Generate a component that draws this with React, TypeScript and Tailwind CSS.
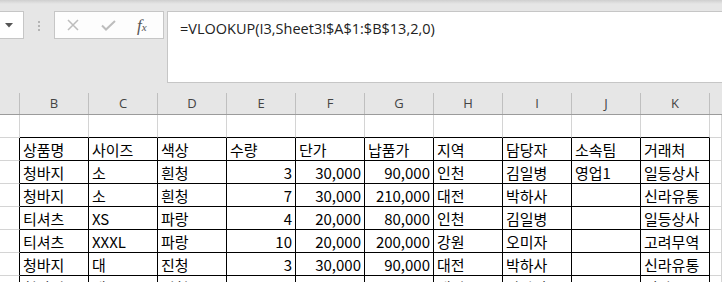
const COLS = ['B', 'C', 'D', 'E', 'F', 'G', 'H', 'I', 'J', 'K'];

const ROWS: string[][] = [
  ['', '', '', '', '', '', '', '', '', ''],
  ['상품명', '사이즈', '색상', '수량', '단가', '납품가', '지역', '담당자', '소속팀', '거래처'],
  ['청바지', '소', '흰청', '3', '30,000', '90,000', '인천', '김일병', '영업1', '일등상사'],
  ['청바지', '소', '흰청', '7', '30,000', '210,000', '대전', '박하사', '', '신라유통'],
  ['티셔츠', 'XS', '파랑', '4', '20,000', '80,000', '인천', '김일병', '', '일등상사'],
  ['티셔츠', 'XXXL', '파랑', '10', '20,000', '200,000', '강원', '오미자', '', '고려무역'],
  ['청바지', '대', '진청', '3', '30,000', '90,000', '대전', '박하사', '', '신라유통'],
  ['청바지', '대', '진청', '1', '30,000', '30,000', '대전', '박하사', '', '신라유통'],
];

const cellFont = { fontFamily: '"Noto Sans CJK KR", "Noto Sans", sans-serif' };
const uiFont = { fontFamily: '"Open Sans", "Noto Sans", sans-serif' };

function FormulaBar() {
  return (
    <div className="h-[93px] bg-[#e6e6e6]">
      <div className="h-[4px] bg-gradient-to-b from-[#cfcfcf] to-[#e6e6e6]" />
      <div className="flex items-start pt-[7px]">
        <div className="flex h-[28px] w-[24px] items-center border-y border-r border-[#c6c6c6] bg-white pl-[5px]">
          <svg width="8" height="5" viewBox="0 0 8 5">
            <path d="M0 0h8L4 4.5z" fill="#555" />
          </svg>
        </div>
        <div className="flex h-[28px] w-[30px] flex-col items-center justify-center gap-[2px] pt-[1px]">
          <span className="h-[2px] w-[2px] bg-[#b4b4b4]" />
          <span className="h-[2px] w-[2px] bg-[#b4b4b4]" />
          <span className="h-[2px] w-[2px] bg-[#b4b4b4]" />
        </div>
        <div className="flex h-[28px] w-[110px] items-center border border-[#c6c6c6] bg-[#fdfdfd]">
          <svg className="ml-[12px]" width="12" height="12" viewBox="0 0 12 12">
            <path d="M1 1l10 10M11 1L1 11" stroke="#bdbdbd" strokeWidth="1.5" fill="none" />
          </svg>
          <svg className="ml-[22px]" width="15" height="11" viewBox="0 0 15 11">
            <path d="M1 5.5l4 4L14 1" stroke="#bdbdbd" strokeWidth="2" fill="none" />
          </svg>
          <span
            className="ml-[21px] italic text-[17px] leading-none text-[#555]"
            style={{ fontFamily: '"Liberation Serif", serif' }}
          >
            f<span className="text-[11px]">x</span>
          </span>
        </div>
        <div className="ml-[3px] h-[72px] flex-1 border-y border-l border-[#c6c6c6] bg-white pl-[12px] pt-[4px]">
          <span className="text-[14.5px] text-[#222]" style={uiFont}>
            =VLOOKUP(I3,Sheet3!$A$1:$B$13,2,0)
          </span>
        </div>
      </div>
    </div>
  );
}

function ColumnHeaders() {
  return (
    <div
      className="grid h-[22px] grid-cols-[20px_repeat(10,69px)_1fr] border-b border-[#9b9b9b] bg-[#e6e6e6] text-[13px] text-[#444]"
      style={uiFont}
    >
      <div className="border-r border-[#bfbfbf]" />
      {COLS.map((c) => (
        <div key={c} className="flex items-center justify-center border-r border-[#bfbfbf]">
          {c}
        </div>
      ))}
      <div />
    </div>
  );
}

function Sheet() {
  return (
    <div className="grid grid-cols-[20px_repeat(10,69px)_1fr] text-[15px] text-black" style={cellFont}>
      {ROWS.map((row, r) => {
        const cells = ['', ...row, ''];
        return cells.map((v, c) => {
          const blackRight = r >= 1 && c <= 10;
          const blackBottom = c >= 1 && c <= 10;
          const numeric = r >= 2 && c >= 4 && c <= 6;
          return (
            <div
              key={`${r}-${c}`}
              className={[
                'flex h-[23px] items-center overflow-hidden whitespace-nowrap border-r border-b leading-none',
                blackRight ? 'border-r-black' : 'border-r-[#d4d4d4]',
                blackBottom ? 'border-b-black' : 'border-b-[#d4d4d4]',
                numeric ? 'justify-end pr-[3px]' : 'pl-[3px]',
              ].join(' ')}
            >
              {v}
            </div>
          );
        });
      })}
    </div>
  );
}

export default function App() {
  return (
    <div className="h-[282px] w-[722px] overflow-hidden bg-white">
      <FormulaBar />
      <ColumnHeaders />
      <Sheet />
    </div>
  );
}
